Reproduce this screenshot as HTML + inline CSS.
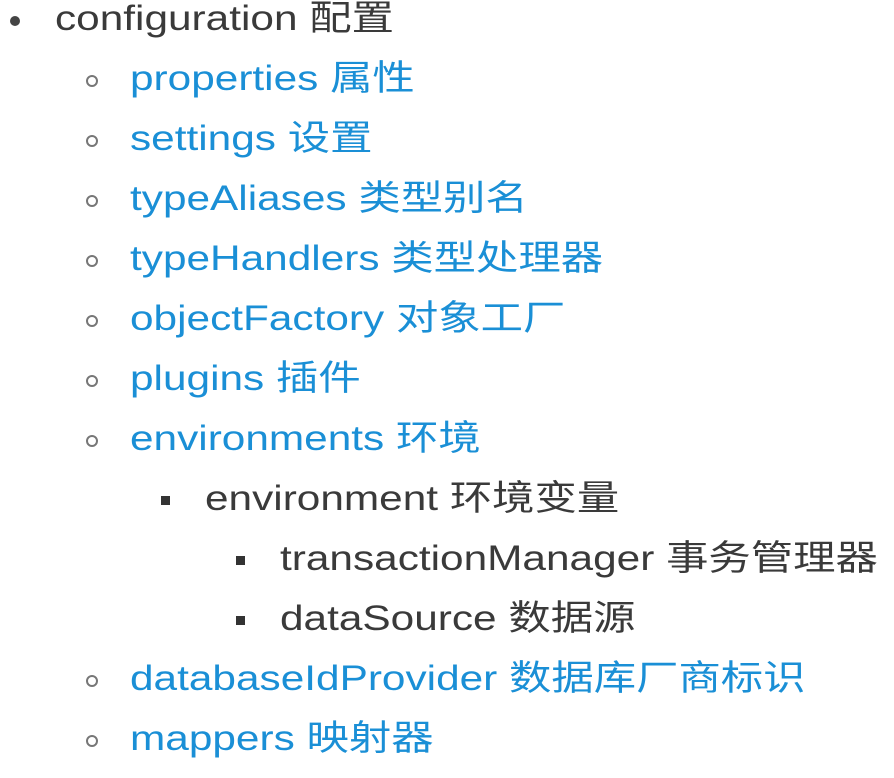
<!DOCTYPE html>
<html><head><meta charset="utf-8"><style>
body{margin:0;background:#fff;width:894px;height:778px;overflow:hidden;position:relative;font-family:"Liberation Sans","Noto Sans CJK SC",sans-serif;font-size:35px;}
.l{position:absolute;height:60px;line-height:60px;white-space:nowrap;color:#3a3a3a;transform:scaleX(1.21);transform-origin:0 0}
.a{color:#1a8fd6}
.b{position:absolute}
.d{width:10px;height:10px;border-radius:50%;background:#444}
.c{width:8px;height:8px;border-radius:50%;border:2px solid #777;box-sizing:content-box}
.s{width:9px;height:9px;background:#333}
</style></head><body>
<div class="b d" style="left:10px;top:16px"></div>
<div class="l" style="left:55px;top:-11px">configuration 配置</div>

<div class="b c" style="left:86px;top:75px"></div><div class="l a" style="left:130px;top:49px">properties 属性</div>
<div class="b c" style="left:86px;top:135px"></div><div class="l a" style="left:130px;top:109px">settings 设置</div>
<div class="b c" style="left:86px;top:195px"></div><div class="l a" style="left:130px;top:169px">typeAliases 类型别名</div>
<div class="b c" style="left:86px;top:255px"></div><div class="l a" style="left:130px;top:229px">typeHandlers 类型处理器</div>
<div class="b c" style="left:86px;top:315px"></div><div class="l a" style="left:130px;top:289px">objectFactory 对象工厂</div>
<div class="b c" style="left:86px;top:375px"></div><div class="l a" style="left:130px;top:349px">plugins 插件</div>
<div class="b c" style="left:86px;top:435px"></div><div class="l a" style="left:130px;top:409px">environments 环境</div>

<div class="b s" style="left:161px;top:496px"></div><div class="l" style="left:205px;top:469px">environment 环境变量</div>
<div class="b s" style="left:236px;top:556px"></div><div class="l" style="left:280px;top:529px">transactionManager 事务管理器</div>
<div class="b s" style="left:236px;top:616px"></div><div class="l" style="left:280px;top:589px">dataSource 数据源</div>

<div class="b c" style="left:86px;top:675px"></div><div class="l a" style="left:130px;top:649px">databaseIdProvider 数据库厂商标识</div>
<div class="b c" style="left:86px;top:735px"></div><div class="l a" style="left:130px;top:709px">mappers 映射器</div>
</body></html>
